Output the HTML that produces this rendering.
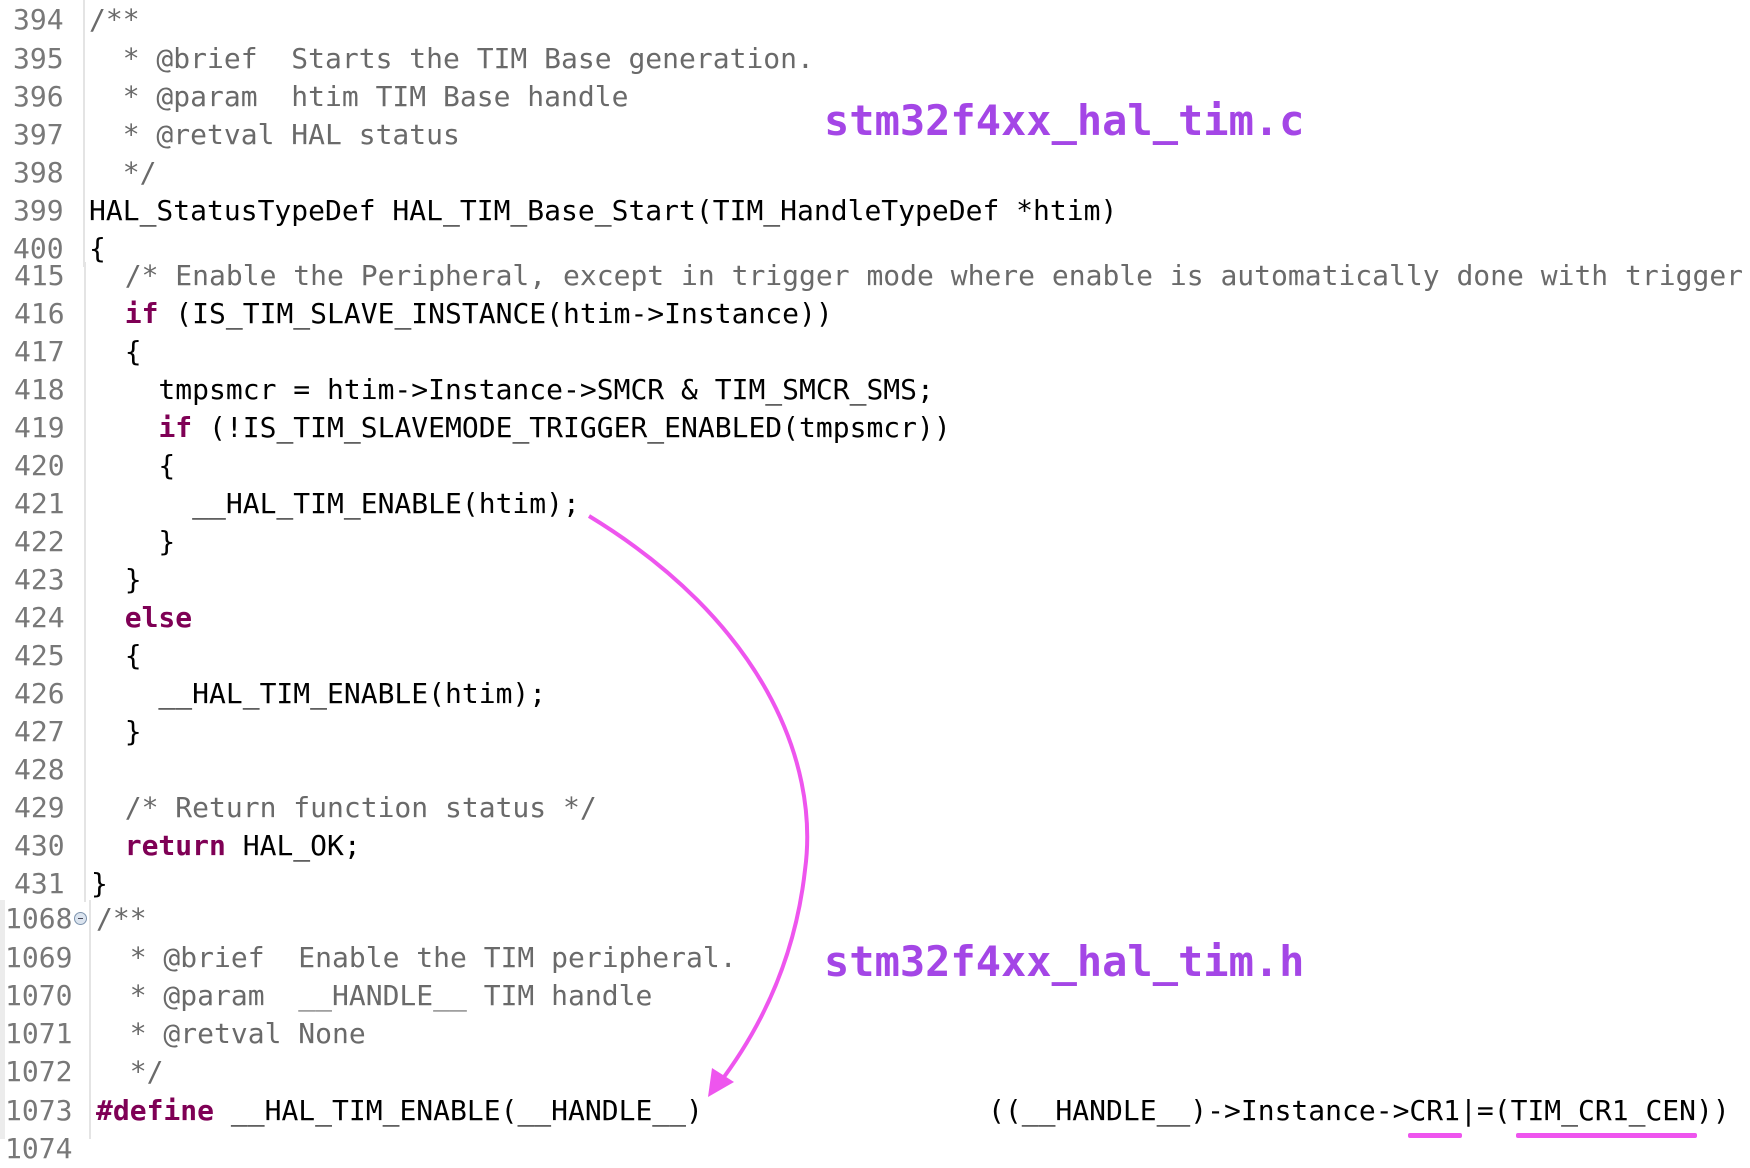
<!DOCTYPE html>
<html><head><meta charset="utf-8"><style>
body{margin:0;width:1750px;height:1139px;background:#fff;position:relative;overflow:hidden;font-family:"DejaVu Sans Mono","Liberation Mono",monospace;}
.l{position:absolute;white-space:pre;line-height:38px;height:38px;color:#000;}
.n{position:absolute;white-space:pre;line-height:38px;color:#787878;}
.a{font-size:28px;}
.b{font-size:28px;}
.c{color:#6a6a6a;}
.k{color:#7f0055;font-weight:bold;}
.lab{position:absolute;font-family:"DejaVu Sans Mono",monospace;font-weight:bold;font-size:42px;color:#a446e6;white-space:pre;line-height:50px;}
</style></head><body>
<div style="position:absolute;left:83px;top:0;width:2px;height:267px;background:#e4e4e4"></div>
<div style="position:absolute;left:84px;top:262px;width:2px;height:640px;background:#e4e4e4"></div>
<div style="position:absolute;left:89px;top:900px;width:2px;height:239px;background:#e4e4e4"></div>
<div style="position:absolute;left:0;top:900px;width:5px;height:239px;background:#ececec"></div>

<div class="n a" style="left:13px;top:1px">394</div>
<div class="l a c" style="left:89px;top:1px">/**</div>
<div class="n a" style="left:13px;top:40px">395</div>
<div class="l a c" style="left:89px;top:40px">  * @brief  Starts the TIM Base generation.</div>
<div class="n a" style="left:13px;top:78px">396</div>
<div class="l a c" style="left:89px;top:78px">  * @param  htim TIM Base handle</div>
<div class="n a" style="left:13px;top:116px">397</div>
<div class="l a c" style="left:89px;top:116px">  * @retval HAL status</div>
<div class="n a" style="left:13px;top:154px">398</div>
<div class="l a c" style="left:89px;top:154px">  */</div>
<div class="n a" style="left:13px;top:192px">399</div>
<div class="l a" style="left:89px;top:192px">HAL_StatusTypeDef HAL_TIM_Base_Start(TIM_HandleTypeDef *htim)</div>
<div class="n a" style="left:13px;top:230px">400</div>
<div class="l a" style="left:89px;top:230px">{</div>

<div class="n b" style="left:14px;top:257px">415</div>
<div class="l b c" style="left:91px;top:257px">  /* Enable the Peripheral, except in trigger mode where enable is automatically done with trigger */</div>
<div class="n b" style="left:14px;top:295px">416</div>
<div class="l b" style="left:91px;top:295px">  <span class="k">if</span> (IS_TIM_SLAVE_INSTANCE(htim-&gt;Instance))</div>
<div class="n b" style="left:14px;top:333px">417</div>
<div class="l b" style="left:91px;top:333px">  {</div>
<div class="n b" style="left:14px;top:371px">418</div>
<div class="l b" style="left:91px;top:371px">    tmpsmcr = htim-&gt;Instance-&gt;SMCR &amp; TIM_SMCR_SMS;</div>
<div class="n b" style="left:14px;top:409px">419</div>
<div class="l b" style="left:91px;top:409px">    <span class="k">if</span> (!IS_TIM_SLAVEMODE_TRIGGER_ENABLED(tmpsmcr))</div>
<div class="n b" style="left:14px;top:447px">420</div>
<div class="l b" style="left:91px;top:447px">    {</div>
<div class="n b" style="left:14px;top:485px">421</div>
<div class="l b" style="left:91px;top:485px">      __HAL_TIM_ENABLE(htim);</div>
<div class="n b" style="left:14px;top:523px">422</div>
<div class="l b" style="left:91px;top:523px">    }</div>
<div class="n b" style="left:14px;top:561px">423</div>
<div class="l b" style="left:91px;top:561px">  }</div>
<div class="n b" style="left:14px;top:599px">424</div>
<div class="l b" style="left:91px;top:599px">  <span class="k">else</span></div>
<div class="n b" style="left:14px;top:637px">425</div>
<div class="l b" style="left:91px;top:637px">  {</div>
<div class="n b" style="left:14px;top:675px">426</div>
<div class="l b" style="left:91px;top:675px">    __HAL_TIM_ENABLE(htim);</div>
<div class="n b" style="left:14px;top:713px">427</div>
<div class="l b" style="left:91px;top:713px">  }</div>
<div class="n b" style="left:14px;top:751px">428</div>
<div class="n b" style="left:14px;top:789px">429</div>
<div class="l b c" style="left:91px;top:789px">  /* Return function status */</div>
<div class="n b" style="left:14px;top:827px">430</div>
<div class="l b" style="left:91px;top:827px">  <span class="k">return</span> HAL_OK;</div>
<div class="n b" style="left:14px;top:865px">431</div>
<div class="l b" style="left:91px;top:865px">}</div>

<div class="n a" style="left:5px;top:900px">1068</div>
<div style="position:absolute;left:74px;top:912px;width:13px;height:13px;border-radius:50%;border:1px solid #7d93ad;background:#dbe4ef;box-sizing:border-box"><div style="position:absolute;left:3px;top:5px;width:5px;height:1px;background:#445"></div></div>
<div class="l a c" style="left:96px;top:900px">/**</div>
<div class="n a" style="left:5px;top:939px">1069</div>
<div class="l a c" style="left:96px;top:939px">  * @brief  Enable the TIM peripheral.</div>
<div class="n a" style="left:5px;top:977px">1070</div>
<div class="l a c" style="left:96px;top:977px">  * @param  __HANDLE__ TIM handle</div>
<div class="n a" style="left:5px;top:1015px">1071</div>
<div class="l a c" style="left:96px;top:1015px">  * @retval None</div>
<div class="n a" style="left:5px;top:1053px">1072</div>
<div class="l a c" style="left:96px;top:1053px">  */</div>
<div class="n a" style="left:5px;top:1092px">1073</div>
<div class="l a" style="left:96px;top:1092px"><span class="k">#define</span> __HAL_TIM_ENABLE(__HANDLE__)</div>
<div class="l a" style="left:988px;top:1092px">((__HANDLE__)-&gt;Instance-&gt;CR1|=(TIM_CR1_CEN))</div>
<div class="n a" style="left:5px;top:1130px">1074</div>

<div class="lab" style="left:824px;top:96px">stm32f4xx_hal_tim.c</div>
<div class="lab" style="left:824px;top:937px">stm32f4xx_hal_tim.h</div>

<svg style="position:absolute;left:0;top:0" width="1750" height="1139">
<path d="M589,516 C760,620 820,760 805,870 C795,960 760,1030 718,1085" fill="none" stroke="#ee55ee" stroke-width="4"/>
<path d="M708,1097 L712,1068 L734,1082 Z" fill="#ee55ee"/>
<rect x="1408" y="1133" width="54" height="5" fill="#ee55ee" rx="2"/>
<rect x="1516" y="1133" width="181" height="5" fill="#ee55ee" rx="2"/>
</svg>
</body></html>
